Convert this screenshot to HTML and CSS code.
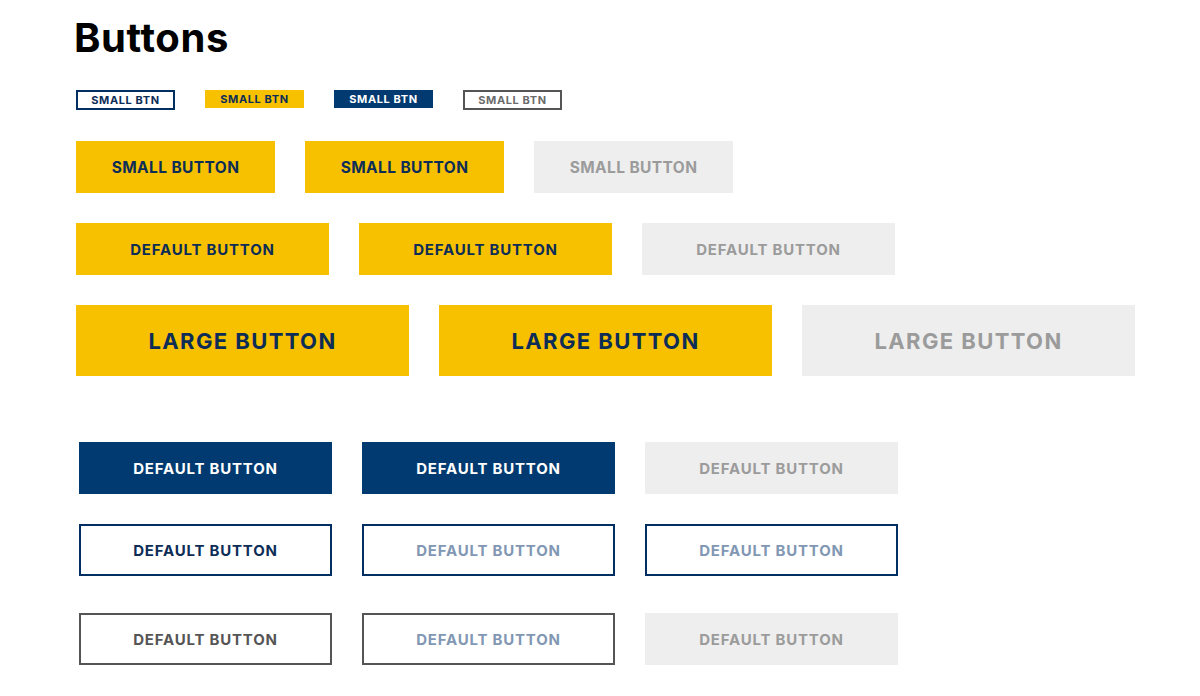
FILE: index.html
```html
<!DOCTYPE html>
<html>
<head>
<meta charset="utf-8">
<link rel="stylesheet" href="styles.css">
</head>
<body>
<main class="page">
  <h1 class="title">Buttons</h1>
  <div class="row row-xs">
    <span class="btn xs outline-navy">SMALL BTN</span>
    <span class="btn xs yellow">SMALL BTN</span>
    <span class="btn xs navy">SMALL BTN</span>
    <span class="btn xs outline-gray">SMALL BTN</span>
  </div>
  <div class="row row-sm">
    <span class="btn sm yellow">SMALL BUTTON</span>
    <span class="btn sm yellow">SMALL BUTTON</span>
    <span class="btn sm disabled">SMALL BUTTON</span>
  </div>
  <div class="row row-md">
    <span class="btn md yellow">DEFAULT BUTTON</span>
    <span class="btn md yellow">DEFAULT BUTTON</span>
    <span class="btn md disabled">DEFAULT BUTTON</span>
  </div>
  <div class="row row-lg">
    <span class="btn lg yellow">LARGE BUTTON</span>
    <span class="btn lg yellow">LARGE BUTTON</span>
    <span class="btn lg disabled">LARGE BUTTON</span>
  </div>
  <div class="group">
    <div class="row row-navy">
      <span class="btn md navy">DEFAULT BUTTON</span>
      <span class="btn md navy">DEFAULT BUTTON</span>
      <span class="btn md disabled">DEFAULT BUTTON</span>
    </div>
    <div class="row row-outline">
      <span class="btn md outline-navy">DEFAULT BUTTON</span>
      <span class="btn md outline-navy faded">DEFAULT BUTTON</span>
      <span class="btn md outline-navy faded">DEFAULT BUTTON</span>
    </div>
    <div class="row row-gray">
      <span class="btn md outline-gray">DEFAULT BUTTON</span>
      <span class="btn md outline-gray faded">DEFAULT BUTTON</span>
      <span class="btn md disabled">DEFAULT BUTTON</span>
    </div>
  </div>
</main>
</body>
</html>
```

FILE: styles.css
```css
* { box-sizing: border-box; }
html, body { margin: 0; padding: 0; background: #ffffff; }
body { font-family: "Inter", "Liberation Sans", sans-serif; }

.page {
  padding: 14px 0 0 76px;
  display: flex;
  flex-direction: column;
  align-items: flex-start;
}

.title {
  margin: 0 0 0 -2px;
  font-size: 40px;
  font-weight: 700;
  color: #000;
  line-height: 48px;
  letter-spacing: 0.6px;
}

.row { display: flex; gap: 30px; }
.row-xs { margin-top: 28px; align-items: flex-start; }
.row-sm { margin-top: 31px; }
.row-md { margin-top: 30px; }
.row-lg { margin-top: 30px; }

.group {
  margin-top: 66px;
  margin-left: 3px;
  display: flex;
  flex-direction: column;
}
.row-outline { margin-top: 30px; }
.row-gray { margin-top: 37px; }

.btn {
  display: flex;
  align-items: center;
  justify-content: center;
  font-weight: 700;
  white-space: nowrap;
}

.xs { width: 99px; height: 18px; font-size: 11px; letter-spacing: 0.6px; }
.xs.outline-navy, .xs.outline-gray { height: 20px; }
.sm { width: 199px; height: 52px; font-size: 15.5px; letter-spacing: 0.4px; }
.md { width: 253px; height: 52px; font-size: 15px; letter-spacing: 0.8px; }
.lg { width: 333px; height: 71px; font-size: 22px; letter-spacing: 1.4px; }

.yellow { background: #f7c100; color: #0d2d57; }
.navy { background: #003a70; color: #ffffff; }
.disabled { background: #eeeeee; color: #9b9b9b; }
.outline-navy { border: 2px solid #012f62; color: #0d2d57; background: #fff; }
.outline-gray { border: 2px solid #555555; color: #555555; background: #fff; }
.outline-navy.faded, .outline-gray.faded { color: #8197b3; }
.xs.outline-gray { color: #6b6b6b; }
```
